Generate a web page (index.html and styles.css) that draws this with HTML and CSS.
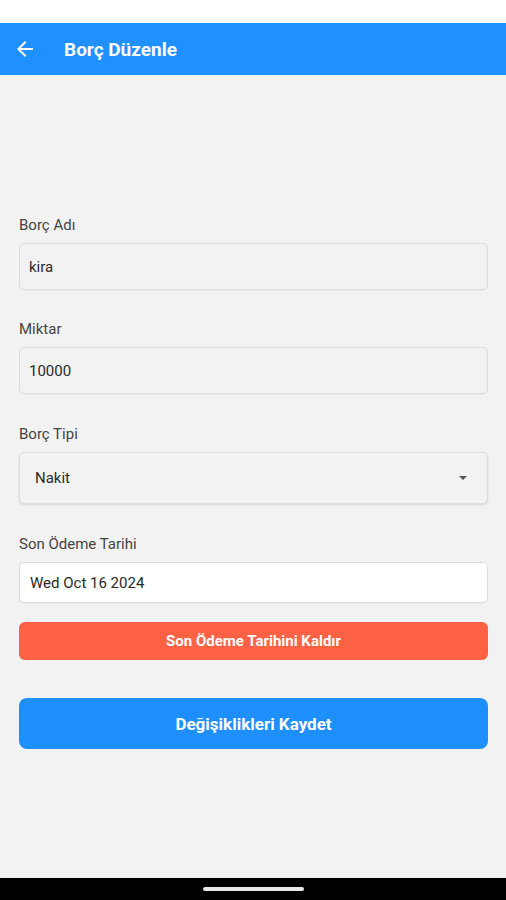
FILE: index.html
```html
<!DOCTYPE html>
<html lang="tr">
<head>
<meta charset="utf-8">
<title>Borç Düzenle</title>
<link rel="stylesheet" href="styles.css">
</head>
<body>
<div class="screen">
  <div class="statusbar"></div>
  <header class="appbar">
    <svg class="back" viewBox="0 0 24 24" width="24" height="24"><path fill="#fff" d="M20 11H7.83l5.59-5.59L12 4l-8 8 8 8 1.41-1.41L7.83 13H20v-2z"/></svg>
    <h1 class="title">Borç Düzenle</h1>
  </header>
  <main class="content">
    <div class="field">
      <label class="label">Borç Adı</label>
      <div class="input">kira</div>
    </div>
    <div class="field">
      <label class="label">Miktar</label>
      <div class="input">10000</div>
    </div>
    <div class="field">
      <label class="label">Borç Tipi</label>
      <div class="input select"><span>Nakit</span><span class="caret"></span></div>
    </div>
    <div class="field last">
      <label class="label">Son Ödeme Tarihi</label>
      <div class="input date">Wed Oct 16 2024</div>
    </div>
    <button class="btn btn-red">Son Ödeme Tarihini Kaldır</button>
    <button class="btn btn-blue">Değişiklikleri Kaydet</button>
  </main>
  <div class="navbar"><span class="handle"></span></div>
</div>
</body>
</html>
```
FILE: styles.css
```css
* { box-sizing: border-box; }
html, body { margin: 0; padding: 0; }
body { font-family: Roboto, "Noto Sans", sans-serif; background: #f2f2f2; }
.screen { width: 506px; height: 900px; display: flex; flex-direction: column; overflow: hidden; }
.statusbar { height: 23px; background: #fff; flex: none; }
.appbar { height: 52px; background: #1e90ff; display: flex; align-items: center; flex: none; padding-left: 13px; }
.back { display: block; margin-right: 27px; }
.title { margin: 0; color: #fff; font-size: 19px; font-weight: 700; }
.content { flex: 1; background: #f2f2f2; padding: 141px 18px 0 19px; display: flex; flex-direction: column; }
.field { display: flex; flex-direction: column; margin-bottom: 31px; }
.field:first-child { margin-bottom: 30px; }
.field.last { margin-bottom: 19px; }
.label { font-size: 15px; line-height: 18px; color: #444; margin-bottom: 9px; }
.input { height: 47px; border: 1px solid #dcdcdc; border-radius: 5px; background: #f2f2f2; font-size: 15px; color: #2a2a2a; display: flex; align-items: center; padding-left: 9px; box-shadow: 0 1px 1px rgba(0,0,0,0.04); }
.select { height: 52px; padding-left: 15px; padding-right: 20px; justify-content: space-between; box-shadow: 0 1px 2px rgba(0,0,0,0.12); }
.caret { width: 0; height: 0; border-left: 4px solid transparent; border-right: 4px solid transparent; border-top: 4px solid #555; }
.date { height: 41px; background: #fff; padding-left: 10px; }
.btn { border: none; color: #fff; font-family: inherit; font-weight: 700; width: 100%; display: block; padding: 0; }
.btn-red { height: 38px; background: #ff6145; border-radius: 6px; font-size: 15px; margin-bottom: 38px; }
.btn-blue { height: 51px; background: #1e8fff; border-radius: 8px; font-size: 17px; }
.navbar { height: 22px; background: #000; flex: none; display: flex; justify-content: center; align-items: center; }
.handle { width: 101px; height: 4px; border-radius: 2px; background: #e8e8e8; }
```
